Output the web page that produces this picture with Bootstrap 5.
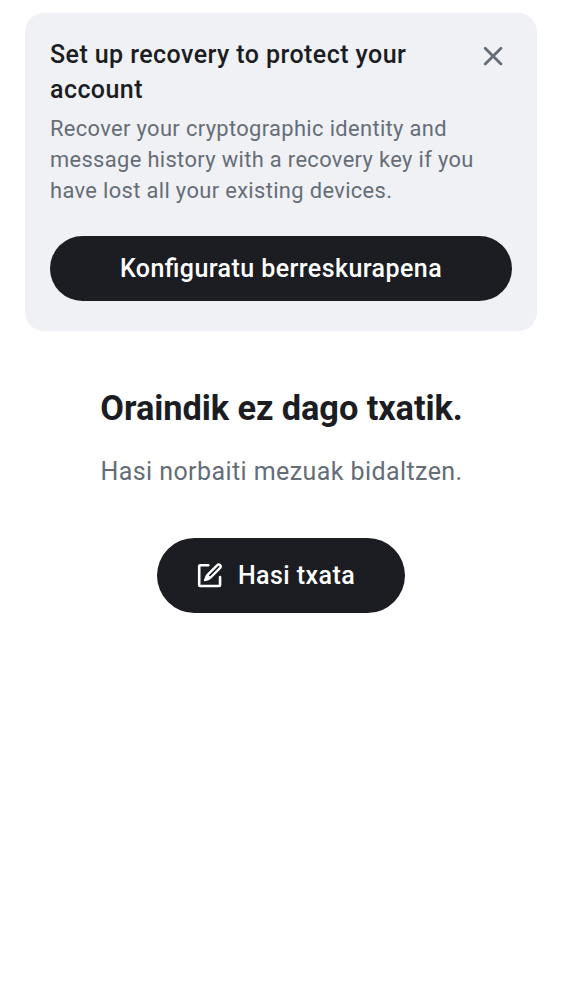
<!DOCTYPE html>
<html lang="eu">
<head>
<meta charset="utf-8">
<meta name="viewport" content="width=device-width, initial-scale=1">
<title>Txatak</title>
<link href="https://cdn.jsdelivr.net/npm/bootstrap@5.3.0/dist/css/bootstrap.min.css" rel="stylesheet">
<style>
body{font-family:Roboto,"Noto Sans",sans-serif;color:#1b1d22;background:#fff}
.banner{margin:12.5px 25px 0;padding:25.3px 25px 29.8px;border-radius:19px;background:#f0f1f5}
.banner-title{font-size:25px;line-height:34.9px;font-weight:500;letter-spacing:.43px;padding-right:50px}
.banner-text{font-size:21.875px;line-height:31.25px;letter-spacing:.36px;color:#656d77;margin-top:5px}
.dismiss{width:38px;height:36px;color:#656d77}
.pill,.pill:hover{background:#1b1d22;color:#fff;font-size:25px;line-height:34px;font-weight:500;letter-spacing:.43px;border:0;font-feature-settings:"liga" 1}
.setup{height:65.6px;margin-top:29.3px;padding:1px 0 0}
.empty-title{font-size:34.375px;line-height:44px;font-weight:700;letter-spacing:-.08px;padding-left:1px;margin-top:55.4px}
.empty-text{font-size:25px;line-height:34px;letter-spacing:.42px;color:#656d77;padding-left:1px;margin-top:24.4px}
.start{width:248.6px;height:75px;margin-top:49.6px;padding:0 0 0 37.5px;gap:12.5px}
.start span{padding-top:1px}
</style>
</head>
<body>
<main class="d-flex flex-column">
<section class="banner">
<div class="position-relative">
<h2 class="banner-title mb-0">Set up recovery to protect your account</h2>
<button class="dismiss btn p-0 border-0 position-absolute top-0 end-0 d-flex align-items-center justify-content-center" aria-label="Itxi"><svg width="22" height="22" viewBox="0 0 22 22" fill="none" stroke="currentColor" stroke-width="2.8" stroke-linecap="round"><path d="M3.2 3.2l15.8 15.8M19 3.2L3.2 19"/></svg></button>
</div>
<p class="banner-text mb-0">Recover your cryptographic identity and message history with a recovery key if you have lost all your existing devices.</p>
<button class="pill setup btn rounded-pill w-100">Konfiguratu berreskurapena</button>
</section>
<section class="d-flex flex-column align-items-center text-center">
<h1 class="empty-title mb-0">Oraindik ez dago txatik.</h1>
<p class="empty-text mb-0">Hasi norbaiti mezuak bidaltzen.</p>
<button class="pill start btn rounded-pill d-flex align-items-center"><svg class="flex-shrink-0" width="31.25" height="31.25" viewBox="0 0 24 24" fill="none" stroke="currentColor" stroke-width="2" stroke-linecap="round" stroke-linejoin="round"><path d="M11 4H4.8Q4 4 4 4.8v14.4q0 .8.8.8h14.4q.8 0 .8-.8V13"/><path stroke-width="1.8" d="M17.9 3.9L10.4 11.4q-.9.9-1.9 4.1 3.2-1 4.1-1.9L20.1 6.1a1.56 1.56 0 0 0-2.2-2.2z"/><path stroke-width="1" fill="currentColor" d="M10.5 11.6l1.9 1.9-3.7 1.8z"/></svg><span>Hasi txata</span></button>
</section>
</main>
<script src="https://cdn.jsdelivr.net/npm/bootstrap@5.3.0/dist/js/bootstrap.bundle.min.js"></script>
</body>
</html>
